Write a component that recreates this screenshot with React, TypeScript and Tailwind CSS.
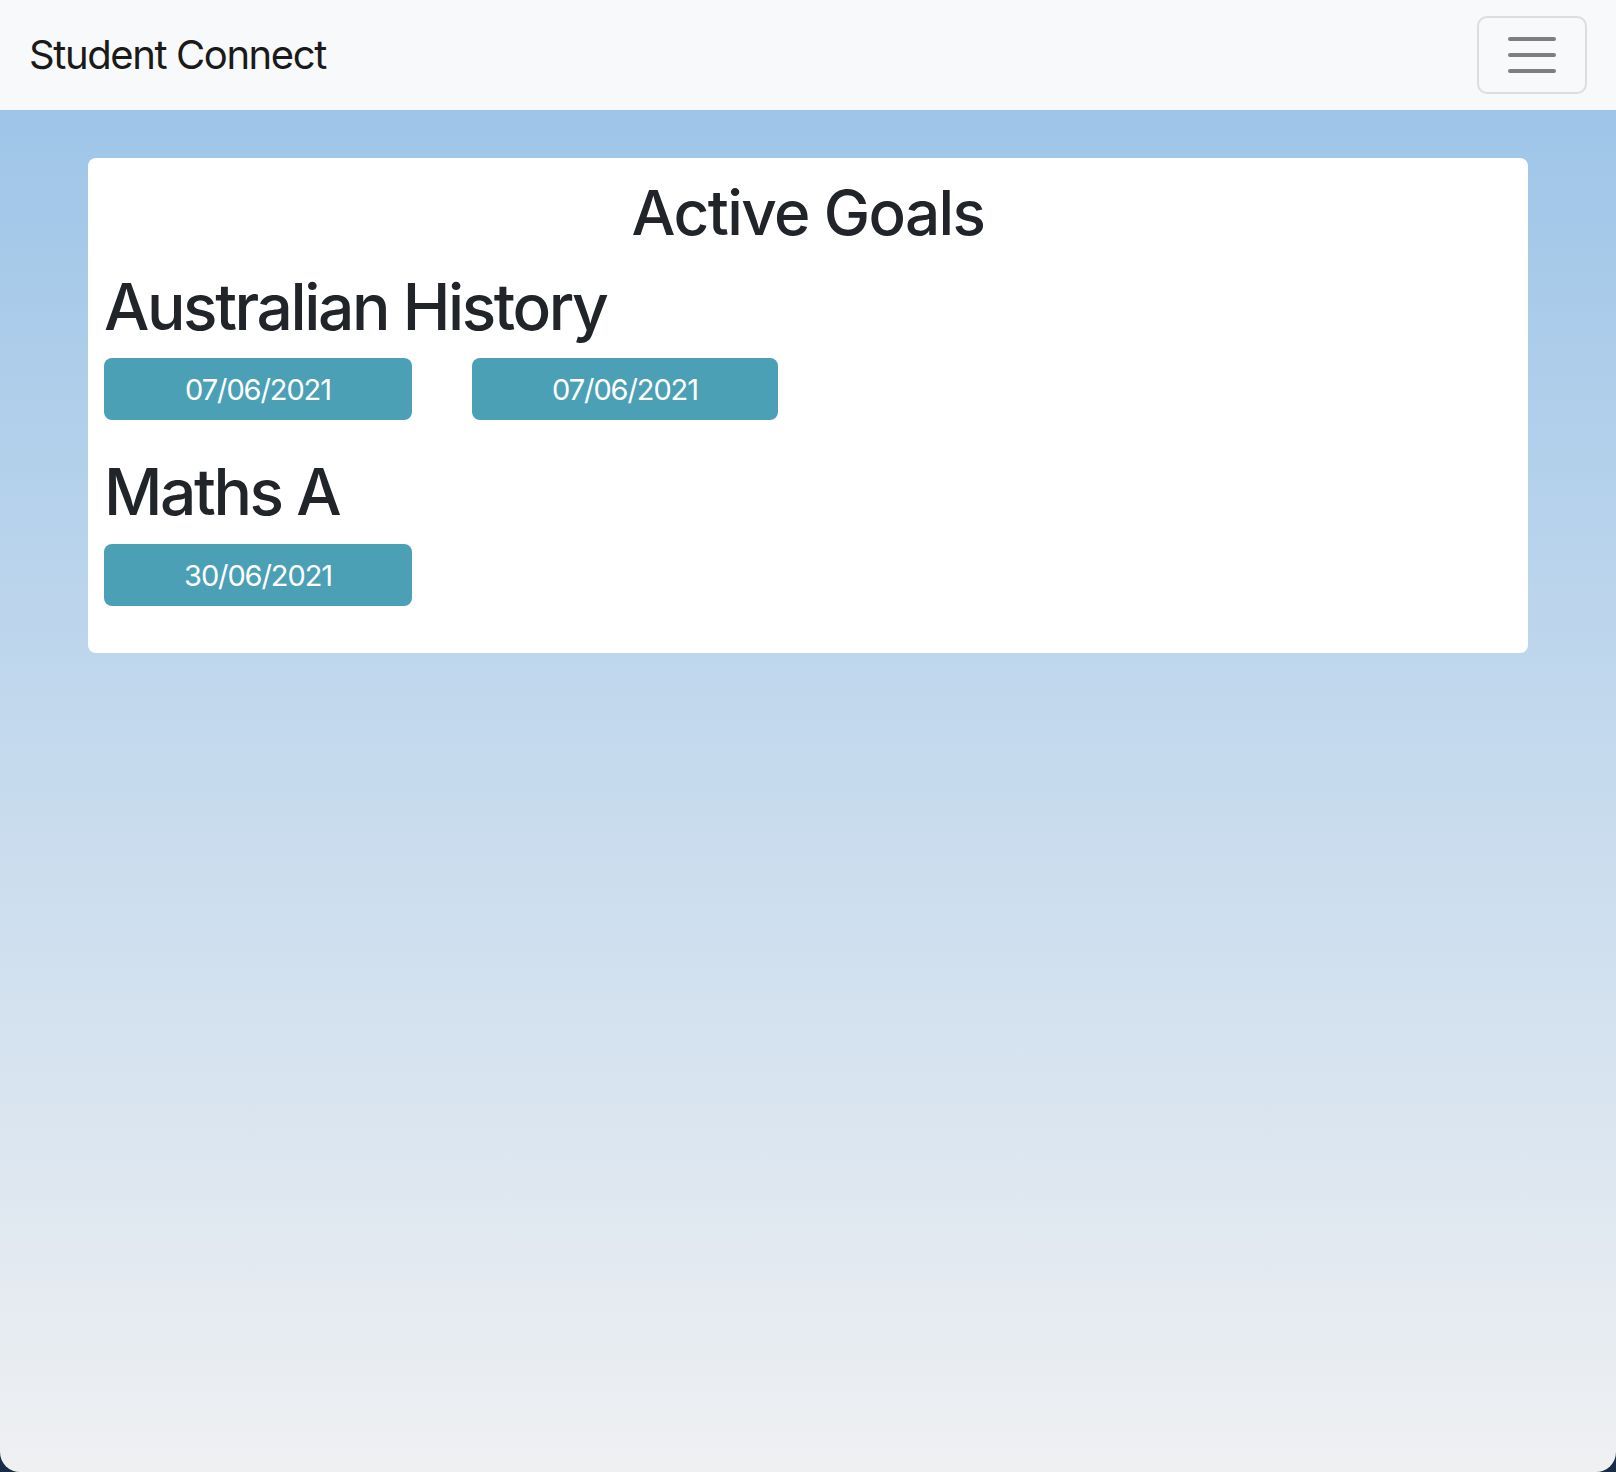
import React from "react";

const font = { fontFamily: "Inter, 'Noto Sans', 'Liberation Sans', sans-serif" };

function DateButton({ label, w }: { label: string; w?: string }) {
  return (
    <button
      className={
        (w === "narrow" ? "w-[306px] " : "w-[308px] ") +
        "h-[62px] rounded-[8px] bg-[#4ba0b6] pt-[2px] text-[29px] font-normal tracking-[-1.1px] text-white"
      }
    >
      {label}
    </button>
  );
}

export default function App() {
  return (
    <div className="min-h-screen bg-[#1b2a46]" style={font}>
      <div className="flex min-h-screen flex-col overflow-hidden rounded-b-[20px]">
        <nav className="flex h-[110px] items-center justify-between bg-[#f8f9fa] pl-[29px] pr-[29px]">
          <span className="text-[40px] leading-none tracking-[-1.4px] text-[#1a1a1a]">Student Connect</span>
          <button className="flex h-[78px] w-[110px] flex-col items-center justify-center gap-[12px] rounded-[10px] border-2 border-[#dcdddf]">
            <span className="block h-[4px] w-[48px] rounded-full bg-[#7f7f7f]" />
            <span className="block h-[4px] w-[48px] rounded-full bg-[#7f7f7f]" />
            <span className="block h-[4px] w-[48px] rounded-full bg-[#7f7f7f]" />
          </button>
        </nav>
        <main className="flex-1 bg-gradient-to-b from-[#9ec5e8] to-[#eff0f2] px-[88px] pt-[48px]">
          <div className="rounded-[8px] bg-white px-[16px] pb-[47px] pt-[17px] text-[#212529]">
            <h2 className="text-center text-[62px] leading-[76px] font-medium tracking-[-1.6px]">Active Goals</h2>
            <h2 className="mt-[18px] text-[64px] leading-[76px] font-medium tracking-[-2.4px]">Australian History</h2>
            <div className="mt-[13px] flex gap-[60px]">
              <DateButton label="07/06/2021" />
              <DateButton label="07/06/2021" w="narrow" />
            </div>
            <h2 className="mt-[34px] text-[64px] leading-[76px] font-medium tracking-[-2.4px]">Maths A</h2>
            <div className="mt-[14px] flex gap-[60px]">
              <DateButton label="30/06/2021" />
            </div>
          </div>
        </main>
      </div>
    </div>
  );
}
